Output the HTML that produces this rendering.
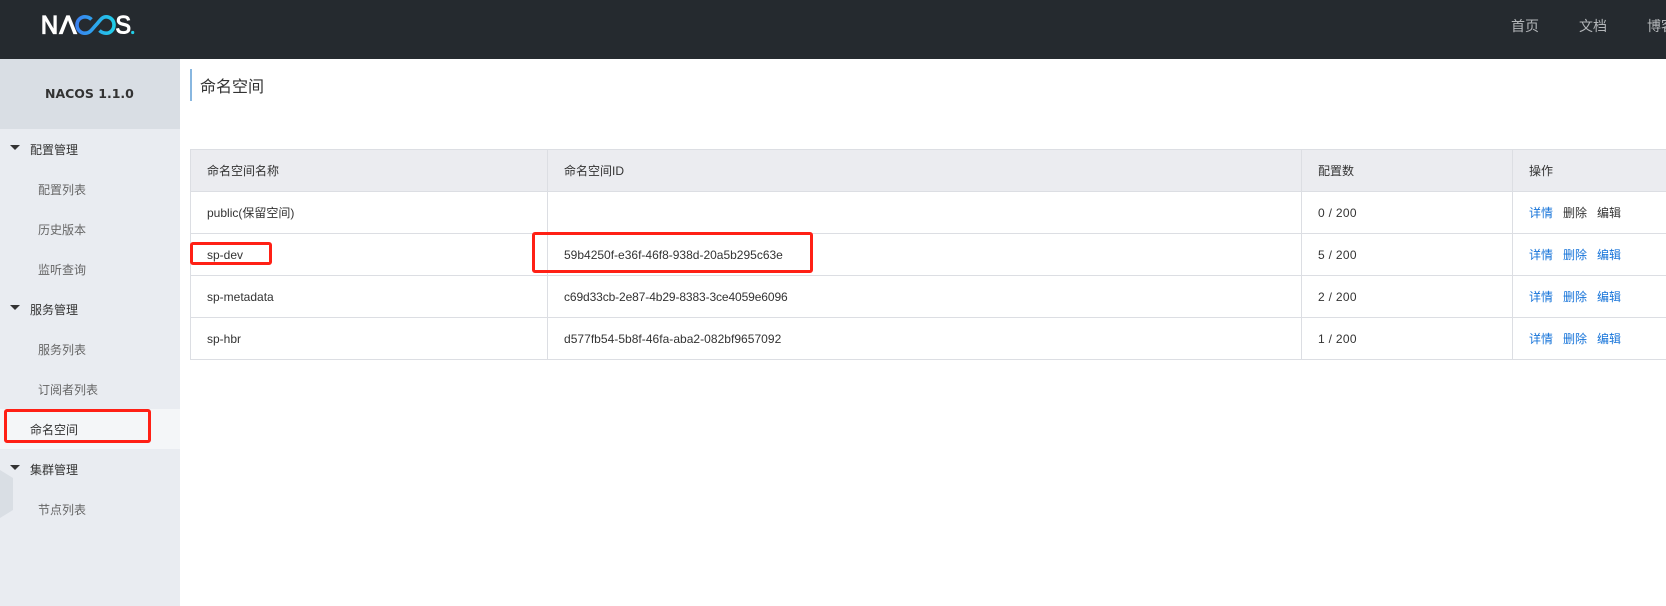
<!DOCTYPE html>
<html lang="zh-CN">
<head>
<meta charset="utf-8">
<title>Nacos</title>
<style>
html,body{margin:0;padding:0;width:1666px;height:606px;overflow:hidden;background:#fff;font-family:"Liberation Sans","Noto Sans CJK SC",sans-serif;font-size:12px;color:#333}
*{box-sizing:border-box}
.a{position:absolute;white-space:nowrap;line-height:20px;height:20px}
.hdr{position:absolute;left:0;top:0;width:1666px;height:59px;background:#252a2f}
.nav{font-size:14px;color:#b3b6b9;top:16px}
.side{position:absolute;left:0;top:59px;width:180px;height:547px;background:#e9ecf1}
.ver{position:absolute;left:0;top:59px;width:180px;height:70px;background:#d9dee4}
.sel{position:absolute;left:0;top:409px;width:180px;height:40px;background:#f4f6f8}
.grp{left:30px;color:#333}
.itm{left:38px;color:#666}
.tri{position:absolute;left:10px;width:0;height:0;border-left:5px solid transparent;border-right:5px solid transparent;border-top:5px solid #333}
.bar{position:absolute;left:190px;top:69px;width:2px;height:32px;background:#88b7e0}
.hl{position:absolute;background:#dcdee3}
.red{position:absolute;border:3px solid #ff2015;border-radius:3px}
.l{color:#1573d9}
.n{letter-spacing:.3px}
</style>
</head>
<body>
<div class="hdr"></div>
<svg style="position:absolute;left:36px;top:8px" width="110" height="36" viewBox="36 8 110 36" role="img" aria-label="NACOS.">
<defs><linearGradient id="g" x1="76" x2="116" y1="0" y2="0" gradientUnits="userSpaceOnUse"><stop offset="0" stop-color="#3a80f0"/><stop offset="1" stop-color="#1fd0e8"/></linearGradient></defs>
<text x="41" y="33.600" font-family="Liberation Sans" font-size="25" fill="#fff" stroke="#fff" stroke-width="1.300" textLength="17" lengthAdjust="spacingAndGlyphs">N</text>
<text x="59.500" y="33.600" font-family="Liberation Sans" font-size="25" fill="#fff" stroke="#fff" stroke-width="1.300" textLength="17" lengthAdjust="spacingAndGlyphs">Λ</text>
<path d="M91.500 19.500C89.500 17.500 87.500 16.800 85 16.800C80.500 16.800 77 20.400 77 25C77 29.600 80.500 33.200 85 33.200C90.500 33.200 92.500 28.500 96 25C99.500 21.500 101.500 16.800 106 16.800C110.500 16.800 114 20.400 114 25C114 29.600 110.500 33.200 106 33.200C103 33.200 101 32 99.500 30.500" fill="none" stroke="url(#g)" stroke-width="3.600"/>
<text x="115.500" y="33.700" font-family="Liberation Sans" font-size="25" fill="#fff" stroke="#fff" stroke-width="1.100" textLength="15.500" lengthAdjust="spacingAndGlyphs">S</text>
<circle cx="132.700" cy="32.500" r="1.600" fill="#22cfe8"/>
</svg>
<div class="a nav" style="left:1511px">首页</div>
<div class="a nav" style="left:1579px">文档</div>
<div class="a nav" style="left:1647px">博客</div>

<div class="side"></div>
<div class="ver"></div>
<div class="sel"></div>
<svg style="position:absolute;left:0;top:470px" width="14" height="48"><polygon points="0,0 13,8 13,40 0,48" fill="#d9dee4"/></svg>
<div class="a" style="left:45px;top:84px;font-family:'DejaVu Sans',sans-serif;font-weight:700;font-size:12.5px;color:#333">NACOS 1.1.0</div>

<div class="tri" style="top:145px"></div>
<div class="a grp" style="top:140px">配置管理</div>
<div class="a itm" style="top:180px">配置列表</div>
<div class="a itm" style="top:220px">历史版本</div>
<div class="a itm" style="top:260px">监听查询</div>
<div class="tri" style="top:305px"></div>
<div class="a grp" style="top:300px">服务管理</div>
<div class="a itm" style="top:340px">服务列表</div>
<div class="a itm" style="top:380px">订阅者列表</div>
<div class="a grp" style="top:420px">命名空间</div>
<div class="tri" style="top:465px"></div>
<div class="a grp" style="top:460px">集群管理</div>
<div class="a itm" style="top:500px">节点列表</div>

<div class="bar"></div>
<div class="a" style="left:200px;top:76px;font-size:16px;line-height:24px;color:#333">命名空间</div>

<div style="position:absolute;left:190px;top:149px;width:1476px;height:42px;background:#ebecf0"></div>
<div class="hl" style="left:190px;top:149px;width:1476px;height:1px"></div>
<div class="hl" style="left:190px;top:191px;width:1476px;height:1px"></div>
<div class="hl" style="left:190px;top:233px;width:1476px;height:1px"></div>
<div class="hl" style="left:190px;top:275px;width:1476px;height:1px"></div>
<div class="hl" style="left:190px;top:317px;width:1476px;height:1px"></div>
<div class="hl" style="left:190px;top:359px;width:1476px;height:1px"></div>
<div class="hl" style="left:190px;top:149px;width:1px;height:211px"></div>
<div class="hl" style="left:547px;top:149px;width:1px;height:211px"></div>
<div class="hl" style="left:1301px;top:149px;width:1px;height:211px"></div>
<div class="hl" style="left:1512px;top:149px;width:1px;height:211px"></div>

<div class="a" style="left:207px;top:161px">命名空间名称</div>
<div class="a" style="left:564px;top:161px">命名空间ID</div>
<div class="a" style="left:1318px;top:161px">配置数</div>
<div class="a" style="left:1529px;top:161px">操作</div>

<div class="a" style="left:207px;top:203px">public(保留空间)</div>
<div class="a n" style="left:1318px;top:203px">0 / 200</div>
<div class="a l" style="left:1529px;top:203px">详情</div>
<div class="a" style="left:1563px;top:203px">删除</div>
<div class="a" style="left:1597px;top:203px">编辑</div>

<div class="a" style="left:207px;top:245px">sp-dev</div>
<div class="a" style="left:564px;top:245px">59b4250f-e36f-46f8-938d-20a5b295c63e</div>
<div class="a n" style="left:1318px;top:245px">5 / 200</div>
<div class="a l" style="left:1529px;top:245px">详情</div>
<div class="a l" style="left:1563px;top:245px">删除</div>
<div class="a l" style="left:1597px;top:245px">编辑</div>

<div class="a" style="left:207px;top:287px">sp-metadata</div>
<div class="a" style="left:564px;top:287px;letter-spacing:-.11px">c69d33cb-2e87-4b29-8383-3ce4059e6096</div>
<div class="a n" style="left:1318px;top:287px">2 / 200</div>
<div class="a l" style="left:1529px;top:287px">详情</div>
<div class="a l" style="left:1563px;top:287px">删除</div>
<div class="a l" style="left:1597px;top:287px">编辑</div>

<div class="a" style="left:207px;top:329px">sp-hbr</div>
<div class="a" style="left:564px;top:329px;letter-spacing:.03px">d577fb54-5b8f-46fa-aba2-082bf9657092</div>
<div class="a n" style="left:1318px;top:329px">1 / 200</div>
<div class="a l" style="left:1529px;top:329px">详情</div>
<div class="a l" style="left:1563px;top:329px">删除</div>
<div class="a l" style="left:1597px;top:329px">编辑</div>

<div class="red" style="left:4px;top:409px;width:147px;height:34px"></div>
<div class="red" style="left:190px;top:242px;width:82px;height:23px"></div>
<div class="red" style="left:532px;top:232px;width:281px;height:41px"></div>
</body>
</html>
